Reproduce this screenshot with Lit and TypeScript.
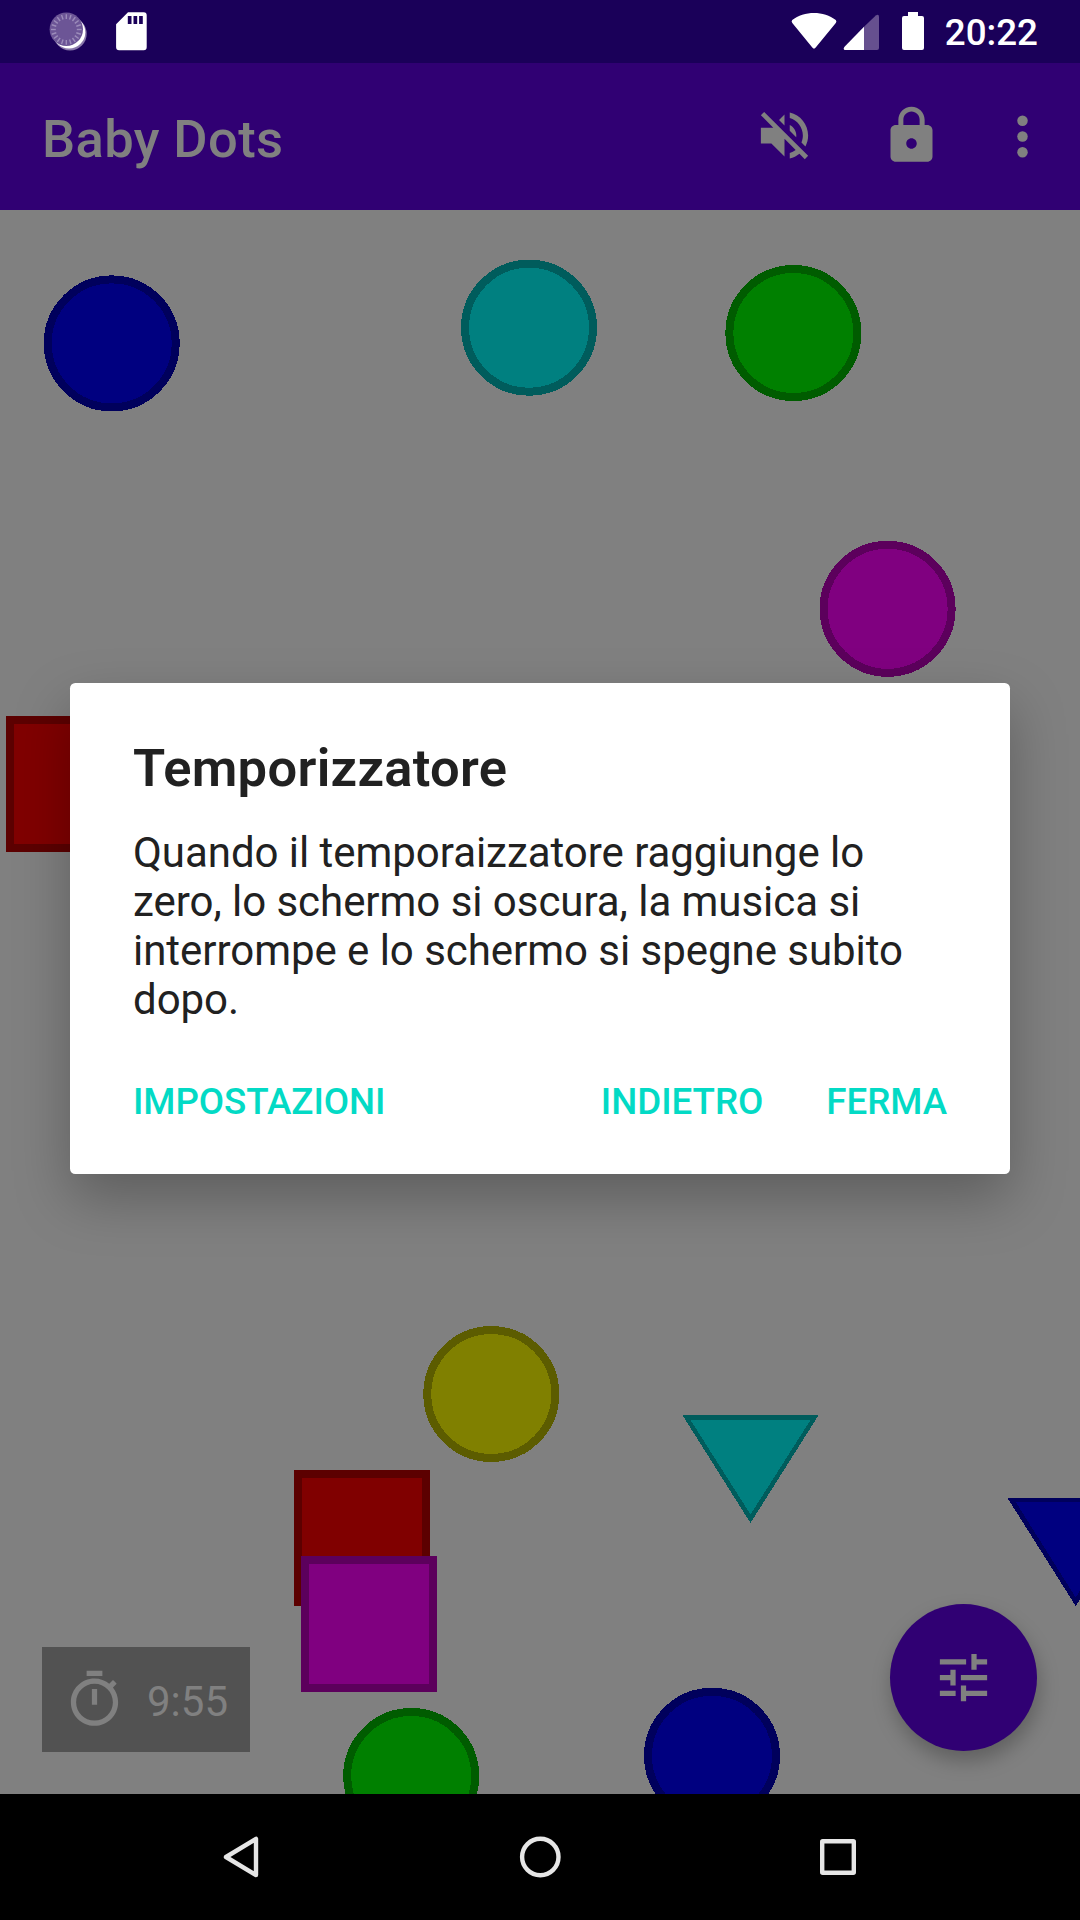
import { LitElement, html, svg, css } from "lit";
import { customElement } from "lit/decorators.js";

type Shape = { kind: "circle" | "square" | "triangle"; x: number; y: number; fill: string; edge: string; lip?: number };

const BLUE = { fill: "#000080", edge: "#00005c" };
const CYAN = { fill: "#008080", edge: "#005c5c" };
const GREEN = { fill: "#008000", edge: "#005c00" };
const MAGENTA = { fill: "#800080", edge: "#5c005c" };
const RED = { fill: "#800000", edge: "#5c0000" };
const YELLOW = { fill: "#808000", edge: "#5c5c00" };

// Shape centres on the play field, in field coordinates.
const SHAPES: Shape[] = [
  { kind: "circle", x: 111.7, y: 133.4, ...BLUE },
  { kind: "circle", x: 529, y: 117.7, ...CYAN },
  { kind: "circle", x: 793.4, y: 123, ...GREEN },
  { kind: "circle", x: 887.6, y: 398.8, ...MAGENTA },
  { kind: "square", x: 74, y: 574, ...RED },
  { kind: "circle", x: 491.3, y: 1184, ...YELLOW },
  { kind: "square", x: 362, y: 1328, ...RED },
  { kind: "square", x: 369, y: 1414, ...MAGENTA },
  { kind: "circle", x: 411.2, y: 1566, ...GREEN },
  { kind: "circle", x: 712, y: 1545.8, ...BLUE },
  { kind: "triangle", x: 750.5, y: 1205, ...CYAN, lip: 5 },
  { kind: "triangle", x: 1075.7, y: 1288, ...BLUE, lip: 4 },
];

@customElement("play-field")
export class PlayField extends LitElement {
  static styles = css`
    :host { display: block; height: 100%; }
    .field { display: block; width: 100%; height: 100%; }
  `;

  private shape(s: Shape) {
    if (s.kind === "circle") {
      return svg`<circle cx=${s.x} cy=${s.y} r="64" fill=${s.fill} stroke=${s.edge} stroke-width="8"></circle>`;
    }
    if (s.kind === "square") {
      return svg`<rect x=${s.x - 64} y=${s.y - 64} width="128" height="128" fill=${s.fill} stroke=${s.edge} stroke-width="8"></rect>`;
    }
    const lip = s.lip ?? 5;
    const outer = `${s.x - 68.2},${s.y} ${s.x + 68.2},${s.y} ${s.x},${s.y + 108}`;
    const inner = `${s.x - 60},${s.y + lip} ${s.x + 60},${s.y + lip} ${s.x},${s.y + 99.5}`;
    return svg`<polygon points=${outer} fill=${s.edge}></polygon><polygon points=${inner} fill=${s.fill}></polygon>`;
  }

  render() {
    return html`<svg class="field" viewBox="0 0 1080 1584" shape-rendering="crispEdges">${SHAPES.map((s) => this.shape(s))}</svg>`;
  }
}

@customElement("status-bar")
export class StatusBar extends LitElement {
  static styles = css`
    :host { display: block; background: #1a0059; color: #fff; }
    .bar { display: flex; justify-content: space-between; height: 63px; box-sizing: border-box; padding: 0 42px 0 48px; }
    .side { display: flex; align-items: center; }
    .icon { display: block; flex: none; height: 63px; }
    .time { font: 500 36.75px/63px Roboto, sans-serif; padding-top: 1px; box-sizing: border-box; height: 63px; }
  `;

  render() {
    const ticks = Array.from({ length: 20 }, (_, i) => i * 18);
    return html`
      <div class="bar">
        <div class="side">
          <svg class="icon" width="102" viewBox="48 0 102 63">
            <circle cx="70" cy="33.8" r="16.7" fill="#8a78ab"></circle>
            <circle cx="69" cy="32.3" r="16.3" fill="#fff"></circle>
            <circle cx="66.3" cy="29.3" r="16.7" fill="#6c5596"></circle>
            ${ticks.map((a) => svg`<path d="M66.3 14.2v4.8" stroke="#9c8cba" stroke-width="1.4" transform="rotate(${a} 66.3 29.5)"></path>`)}
            <path fill="#fff" fill-rule="evenodd" d="M128 12.3h15.7a3 3 0 0 1 3 3v32a3 3 0 0 1-3 3h-24.6a3 3 0 0 1-3-3V24.2zM127.8 16v8h3.7v-8zm5.7 0v8h3.7v-8zm5.6 0v8h3.7v-8z"></path>
          </svg>
        </div>
        <div class="side">
          <svg class="icon" width="155" viewBox="790 0 155 63">
            <path fill="#fff" d="M792.2 20.1Q791 21.6 792.3 23.1L812.3 47.6Q814 49.7 815.7 47.6L835.8 23.1Q837 21.6 835.8 20.1C824 10.6 804 10.6 792.2 20.1z"></path>
            <path fill="#66508f" d="M864 26.8 875.8 15.4Q879 13.600 879 17V48a2 2 0 0 1-2 2H864z"></path>
            <path fill="#fff" d="M864 26.800V50H845Q842.800 49.500 844.300 46.900z"></path>
            <path fill="#fff" d="M908 12h10v4h4a2 2 0 0 1 2 2v30a2 2 0 0 1-2 2h-18a2 2 0 0 1-2-2V18a2 2 0 0 1 2-2h4z"></path>
          </svg>
          <span class="time">20:22</span>
        </div>
      </div>
    `;
  }
}

@customElement("app-bar")
export class AppBar extends LitElement {
  static styles = css`
    :host { display: block; background: #300073; color: #808080; }
    .bar { display: flex; align-items: center; justify-content: space-between; height: 147px; box-sizing: border-box; padding: 0 26px 0 42px; }
    .title { font: 500 52.5px/62px Roboto, sans-serif; letter-spacing: 0.38px; padding-top: 4px; }
    .actions { display: flex; align-items: center; }
    .icon { display: block; width: 63px; height: 63px; fill: currentColor; }
    .raised { margin-bottom: 2px; }
    .lock { margin-left: 64px; margin-right: 48px; }
  `;

  render() {
    return html`
      <div class="bar">
        <div class="title">Baby Dots</div>
        <div class="actions">
          <svg class="icon raised" viewBox="0 0 24 24"><path d="M16.5 12c0-1.77-1.02-3.29-2.5-4.03v2.21l2.45 2.45c.03-.2.05-.41.05-.63zm2.5 0c0 .94-.2 1.82-.54 2.64l1.51 1.51C20.63 14.91 21 13.5 21 12c0-4.28-2.99-7.86-7-8.77v2.06c2.89.86 5 3.54 5 6.71zM4.27 3L3 4.27 7.73 9H3v6h4l5 5v-6.73l4.25 4.25c-.67.52-1.42.93-2.25 1.18v2.06c1.38-.31 2.63-.95 3.69-1.81L19.73 21 21 19.73l-9-9L4.27 3zM12 4L9.91 6.09 12 8.18V4z"></path></svg>
          <svg class="icon raised lock" viewBox="0 0 24 24"><path d="M18 8h-1V6c0-2.76-2.24-5-5-5S7 3.24 7 6v2H6c-1.100 0-2 .9-2 2v10c0 1.100.9 2 2 2h12c1.100 0 2-.9 2-2V10c0-1.100-.9-2-2-2zm-6 9c-1.100 0-2-.9-2-2s.9-2 2-2 2 .9 2 2-.9 2-2 2zm3.100-9H8.900V6c0-1.710 1.390-3.100 3.100-3.100s3.100 1.390 3.100 3.100v2z"></path></svg>
          <svg class="icon" viewBox="0 0 24 24"><circle cx="12" cy="6" r="2"></circle><circle cx="12" cy="12" r="2"></circle><circle cx="12" cy="18" r="2"></circle></svg>
        </div>
      </div>
    `;
  }
}

@customElement("timer-dialog")
export class TimerDialog extends LitElement {
  static styles = css`
    :host { display: block; }
    .card { display: flex; flex-direction: column; height: 491px; box-sizing: border-box; padding: 54px 63px 0; background: #fff; color: #212121; border-radius: 5.25px; box-shadow: 0 24px 56px rgba(0, 0, 0, 0.27); font-family: Roboto, sans-serif; }
    .title { margin: 0; font-size: 52.5px; font-weight: 560; line-height: 62px; letter-spacing: 0.3px; }
    .message { margin: 29px 0 0; font-size: 42px; font-weight: 400; line-height: 49px; letter-spacing: -0.04px; }
    .line { display: block; white-space: nowrap; }
    .buttons { display: flex; gap: 63px; margin-top: 56px; }
    .button { appearance: none; border: 0; padding: 0; background: none; color: #03dac5; font: 500 36.75px/44px Roboto, sans-serif; letter-spacing: -0.05px; text-transform: uppercase; }
    .neutral { margin-right: auto; }
  `;

  render() {
    return html`
      <section class="card" role="dialog">
        <h2 class="title">Temporizzatore</h2>
        <p class="message">
          <span class="line">Quando il temporaizzatore raggiunge lo</span>
          <span class="line">zero, lo schermo si oscura, la musica si</span>
          <span class="line">interrompe e lo schermo si spegne subito</span>
          <span class="line">dopo.</span>
        </p>
        <div class="buttons">
          <button class="button neutral">Impostazioni</button>
          <button class="button">Indietro</button>
          <button class="button">Ferma</button>
        </div>
      </section>
    `;
  }
}

@customElement("nav-bar")
export class NavBar extends LitElement {
  static styles = css`
    :host { display: block; background: #000; }
    .bar { display: flex; justify-content: space-between; align-items: center; height: 126px; box-sizing: border-box; padding: 0 210px; }
    .icon { display: block; width: 63px; height: 63px; fill: none; stroke: #e6e6e6; stroke-width: 4.4; stroke-linejoin: round; }
  `;

  render() {
    return html`
      <div class="bar">
        <svg class="icon" viewBox="0 0 63 63"><path d="M16 31 46 12.900V49.100z"></path></svg>
        <svg class="icon" viewBox="0 0 63 63"><circle cx="31.300" cy="31" r="18.200"></circle></svg>
        <svg class="icon" viewBox="0 0 63 63"><rect x="15.200" y="15.200" width="31.600" height="31.600" rx="0.500"></rect></svg>
      </div>
    `;
  }
}

@customElement("app-root")
export class AppRoot extends LitElement {
  static styles = css`
    :host { display: block; width: 1080px; height: 1920px; overflow: hidden; }
    .screen { display: flex; flex-direction: column; position: relative; height: 1920px; }
    .stage { position: relative; flex: 1; min-height: 0; overflow: hidden; background: #808080; }
    .timer { position: absolute; left: 42px; bottom: 42px; display: flex; align-items: center; gap: 21px; width: 208px; height: 105px; box-sizing: border-box; padding: 0 21px; background: #525252; color: #808080; font: 400 42px/49px Roboto, sans-serif; }
    .timer-text { padding-top: 3px; }
    .icon { display: block; flex: none; width: 63px; height: 63px; fill: #808080; }
    .fab { position: absolute; right: 43px; bottom: 43px; display: grid; place-items: center; width: 147px; height: 147px; border: 0; padding: 0; border-radius: 50%; background: #300073; box-shadow: 2px 10px 20px rgba(0, 0, 0, 0.26); }
    .dialog { position: absolute; left: 70px; right: 70px; top: 473px; }
  `;

  render() {
    return html`
      <div class="screen">
        <status-bar></status-bar>
        <app-bar></app-bar>
        <main class="stage">
          <play-field></play-field>
          <div class="timer">
            <svg class="icon" viewBox="0 0 24 24"><path d="M15 1H9v2h6V1zm-4 13h2V8h-2v6zm8.030-6.610l1.420-1.420c-.43-.51-.9-.99-1.410-1.410l-1.420 1.420C16.070 4.740 14.120 4 12 4c-4.970 0-9 4.030-9 9s4.020 9 9 9 9-4.030 9-9c0-2.120-.74-4.070-1.970-5.610zM12 20c-3.870 0-7-3.130-7-7s3.130-7 7-7 7 3.130 7 7-3.130 7-7 7z"></path></svg>
            <span class="timer-text">9:55</span>
          </div>
          <button class="fab" aria-label="Impostazioni">
            <svg class="icon" viewBox="0 0 24 24"><path d="M3 17v2h6v-2H3zM3 5v2h10V5H3zm10 16v-2h8v-2h-8v-2h-2v6h2zM7 9v2H3v2h4v2h2V9H7zm14 4v-2H11v2h10zm-6-4h2V7h4V5h-4V3h-2v6z"></path></svg>
          </button>
          <timer-dialog class="dialog"></timer-dialog>
        </main>
        <nav-bar></nav-bar>
      </div>
    `;
  }
}
